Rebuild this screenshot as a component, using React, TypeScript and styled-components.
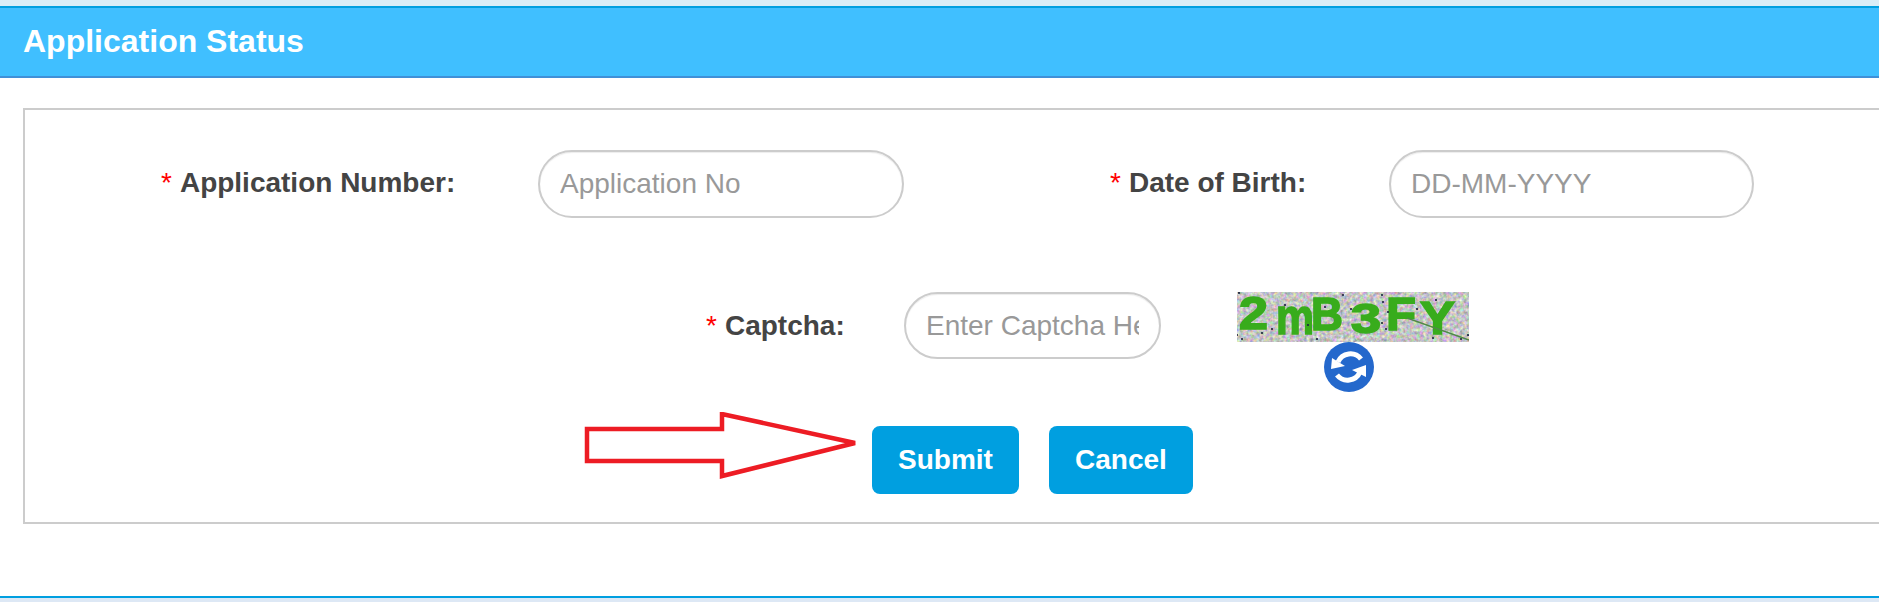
import React from 'react';
import styled, { createGlobalStyle } from 'styled-components';

const GlobalStyle = createGlobalStyle`
  html, body {
    margin: 0;
    padding: 0;
    background: #fff;
    overflow: hidden;
  }
  * {
    box-sizing: border-box;
  }
`;

const Page = styled.div`
  width: 1879px;
  height: 602px;
  overflow: hidden;
  font-family: "Liberation Sans", Arial, sans-serif;
  font-size: 28px;
  color: #444;
  background: #fff;
`;

const TopStrip = styled.div`
  height: 6px;
  background: #d9edf7;
`;

const Header = styled.h1`
  margin: 0;
  height: 72px;
  padding-left: 23px;
  border-top: 2px solid #009fe0;
  border-bottom: 2px solid #4090d8;
  background: #40bfff;
  color: #fff;
  font-size: 32px;
  font-weight: 700;
  line-height: 66px;
`;

const Card = styled.form`
  width: 1900px;
  height: 416px;
  margin: 30px 0 72px 23px;
  padding-top: 40px;
  border: 2px solid #ccc;
`;

const Row = styled.div`
  display: flex;
  align-items: flex-start;
  padding-left: ${(p: { $indent: number }) => p.$indent}px;
`;

const SecondRow = styled(Row)`
  margin-top: 74px;
`;

const Label = styled.label<{ $width: number; $height: number }>`
  display: block;
  flex: none;
  width: ${(p) => p.$width}px;
  font-weight: 700;
  line-height: ${(p) => p.$height}px;
  white-space: nowrap;
`;

const Star = styled.span`
  color: #f00;
  font-weight: 400;
  margin-right: 8px;
`;

const Field = styled.input<{ $width: number; $height: number }>`
  flex: none;
  width: ${(p) => p.$width}px;
  height: ${(p) => p.$height}px;
  padding: 0 20px;
  border: 2px solid #ccc;
  border-radius: 34px;
  box-shadow: inset 0 1px 1px rgba(0, 0, 0, 0.075);
  background: #fff;
  color: #444;
  font-family: inherit;
  font-size: 28px;
  outline: none;

  &::placeholder {
    color: #999;
    opacity: 1;
  }
`;

const Gap = styled.div<{ $width: number }>`
  flex: none;
  width: ${(p) => p.$width}px;
`;

const CaptchaColumn = styled.div`
  display: flex;
  flex-direction: column;
  align-items: center;
  width: 232px;
  margin-left: 76px;
`;

const CaptchaPicture = styled.svg`
  display: block;
  width: 232px;
  height: 50px;
`;

const RefreshIcon = styled.svg`
  display: block;
  width: 50px;
  height: 50px;
  margin-right: 8px;
`;

const Actions = styled.div`
  position: relative;
  display: flex;
  gap: 30px;
  margin-top: 34px;
  padding-left: 847px;
`;

const Button = styled.button<{ $width: number }>`
  width: ${(p) => p.$width}px;
  height: 68px;
  padding: 0;
  border: none;
  border-radius: 8px;
  background: #009fe0;
  color: #fff;
  font-family: inherit;
  font-size: 28px;
  font-weight: 700;
`;

const Arrow = styled.svg`
  position: absolute;
  left: 558px;
  top: -14px;
  width: 276px;
  height: 68px;
`;

const Footer = styled.div`
  height: 6px;
  border-top: 2px solid #009fe0;
  background: #dde8f5;
`;

const specks = [
  [2, 1], [5, 47], [0, 43], [35, 37], [25, 41], [71, 33], [80, 47], [106, 3], [114, 17],
  [145, 3], [151, 20], [146, 10], [145, 31], [149, 37], [180, 17], [199, 8], [224, 47],
  [231, 43], [196, 46], [48, 13], [88, 15],
];

// x, baseline, width and font size of every captcha character
const glyphs: [string, number, number, number, number][] = [
  ['2', 2, 37, 29, 46],
  ['m', 39, 42, 38, 50],
  ['B', 74, 38, 32, 46],
  ['3', 114, 41, 30, 42],
  ['F', 149, 38, 30, 47],
  ['Y', 183, 42, 35, 47],
];

const Captcha = () => (
  <CaptchaPicture viewBox="0 0 232 50" role="img" aria-label="captcha">
    <filter id="grain" x="0" y="0" width="100%" height="100%" colorInterpolationFilters="sRGB">
      <feTurbulence type="fractalNoise" baseFrequency="0.3" numOctaves="2" seed="11" />
      <feColorMatrix
        type="matrix"
        values="0.6 0.1 0 0 0.42  0.1 0.6 0 0 0.42  0.1 0 0.6 0 0.42  0 0 0 0 1"
      />
      <feGaussianBlur stdDeviation="0.5" />
    </filter>
    <filter id="soft" x="-5%" y="-5%" width="110%" height="110%">
      <feGaussianBlur stdDeviation="0.5" />
    </filter>
    <rect width="232" height="50" fill="#cfc9cf" />
    <rect width="232" height="50" filter="url(#grain)" />
    <g
      filter="url(#soft)"
      fill="#38ac1c"
      stroke="#38ac1c"
      strokeWidth="1.6"
      fontFamily="Liberation Sans, sans-serif"
      fontWeight="700"
    >
      {glyphs.map(([c, x, y, w, size]) => (
        <text key={c} x={x} y={y} fontSize={size} textLength={w} lengthAdjust="spacingAndGlyphs">
          {c}
        </text>
      ))}
    </g>
    <path d="M170 26 L232 48" stroke="#4f8a48" strokeWidth="1.4" fill="none" />
    {specks.map(([x, y]) => (
      <circle key={`${x}-${y}`} cx={x} cy={y} r="1.1" fill="#1c2340" />
    ))}
  </CaptchaPicture>
);

const Refresh = () => (
  <RefreshIcon viewBox="0 0 50 50" role="img" aria-label="refresh">
    <circle cx="25" cy="25" r="25" fill="#2468cc" />
    <g fill="none" stroke="#fff" strokeWidth="5">
      <path d="M14 20 A13.5 13.5 0 0 1 37 17" />
      <path d="M36 30 A13.5 13.5 0 0 1 13 33" />
    </g>
    <path d="M8 16 L21 24 L7 27 Z" fill="#fff" />
    <path d="M42 35 L28 28 L42 23 Z" fill="#fff" />
  </RefreshIcon>
);

export default function App() {
  return (
    <Page>
      <GlobalStyle />
      <TopStrip />
      <Header>Application Status</Header>
      <Card onSubmit={(e) => e.preventDefault()}>
        <Row $indent={136}>
          <Label $width={377} $height={66}>
            <Star>*</Star>Application Number:
          </Label>
          <Field $width={366} $height={68} placeholder="Application No" />
          <Gap $width={206} />
          <Label $width={279} $height={66}>
            <Star>*</Star>Date of Birth:
          </Label>
          <Field $width={365} $height={68} placeholder="DD-MM-YYYY" />
        </Row>
        <SecondRow $indent={681}>
          <Label $width={198} $height={67}>
            <Star>*</Star>Captcha:
          </Label>
          <Field $width={257} $height={67} placeholder="Enter Captcha Here" />
          <CaptchaColumn>
            <Captcha />
            <Refresh />
          </CaptchaColumn>
        </SecondRow>
        <Actions>
          <Arrow viewBox="0 0 276 68" aria-hidden="true">
            <path
              d="M4 17 H139 V2 L272 31 L139 64 V49 H4 Z"
              fill="none"
              stroke="#ed1c24"
              strokeWidth="4.5"
            />
          </Arrow>
          <Button type="submit" $width={147}>Submit</Button>
          <Button type="button" $width={144}>Cancel</Button>
        </Actions>
      </Card>
      <Footer />
    </Page>
  );
}
